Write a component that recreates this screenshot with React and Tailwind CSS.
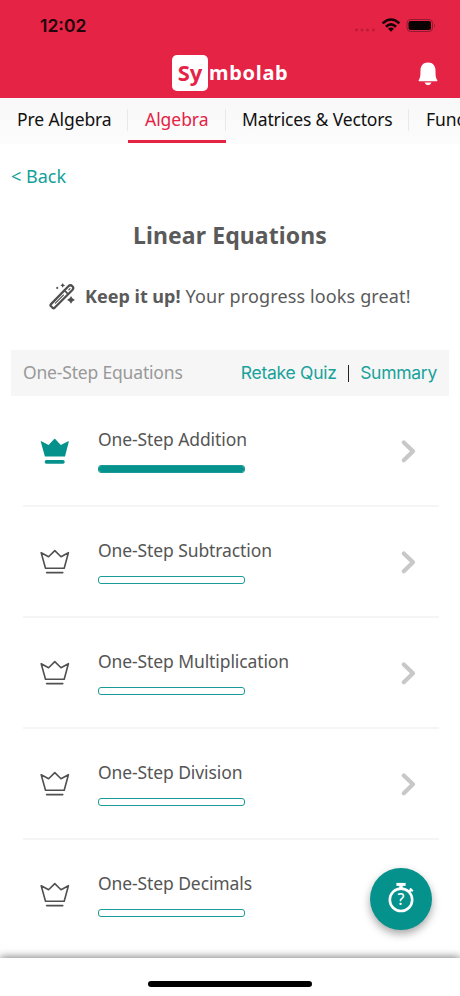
import React, { useState } from 'react'
import clsx from 'clsx'

const TABS = [
  { name: 'Pre Algebra', width: 'w-[128px]', tracking: 'tracking-[-0.1px]' },
  { name: 'Algebra', width: 'w-[98px]', tracking: 'tracking-[-0.05px]' },
  { name: 'Matrices & Vectors', width: 'w-[183px]', tracking: 'tracking-[-0.15px] -indent-px' },
  { name: 'Functions', width: 'w-[120px]', tracking: 'tracking-[-0.1px]' },
]

const LESSONS = [
  { id: 1, title: 'One-Step Addition', progress: 100 },
  { id: 2, title: 'One-Step Subtraction', progress: 0 },
  { id: 3, title: 'One-Step Multiplication', progress: 0 },
  { id: 4, title: 'One-Step Division', progress: 0 },
  { id: 5, title: 'One-Step Decimals', progress: 0 },
]

function StatusIcons() {
  return (
    <svg width="84" height="16" viewBox="0 0 84 16">
      <g fill="#b81c38">
        <circle cx="4.5" cy="13" r="1.4" />
        <circle cx="10" cy="13" r="1.4" />
        <circle cx="15.5" cy="13" r="1.4" />
        <circle cx="21.5" cy="13" r="1.4" />
      </g>
      <g fill="none" stroke="#160306" strokeWidth="2.6">
        <path d="M30.6 6.4 Q39 -1.4 47.4 6.4" />
        <path d="M34 9.8 Q39 5 44 9.8" />
      </g>
      <path d="M36 11.8 Q39 9.2 42 11.8 L39 14.8 Z" fill="#160306" />
      <rect x="55" y="2.5" width="25.5" height="12" rx="3.6" fill="none" stroke="#921a30" />
      <rect x="56.5" y="4" width="22.5" height="9" rx="2.2" fill="#0b0203" />
      <path d="M82 6.5 Q83.7 8.5 82 10.5 Z" fill="#921a30" />
    </svg>
  )
}

function Bell() {
  return (
    <svg width="20" height="24" viewBox="0 0 20 24" fill="#fff">
      <path d="M10 0.5 C5 0.5 2.5 4 2.5 8.5 C2.5 14 2.2 16 0.7 18 Q0.3 19.2 1.3 19.2 H18.7 Q19.7 19.2 19.3 18 C17.8 16 17.5 14 17.5 8.5 C17.5 4 15 0.5 10 0.5 Z" />
      <path d="M6.5 20.6 H13.5 Q12.5 23.2 10 23.2 Q7.5 23.2 6.5 20.6 Z" />
    </svg>
  )
}

function Crown({ filled }) {
  if (filled) {
    return (
      <svg width="30" height="27" viewBox="0 0 30 27" fill="#05928c">
        <path d="M0.8 3.8 Q0.6 2.9 1.4 3.3 L8.6 6.9 L14.2 0.9 Q14.7 0.4 15.2 0.9 L20.8 6.9 L28.2 3.3 Q29 2.9 28.8 3.8 L25 18.6 H4.9 Z" />
        <rect x="4.7" y="22" width="20" height="3.8" rx="1.7" />
      </svg>
    )
  }
  return (
    <svg width="30" height="27" viewBox="0 0 30 27" fill="none" stroke="#505050" strokeWidth="1.6" strokeLinejoin="round" strokeLinecap="round">
      <path d="M1.2 3.7 L8.6 7.7 L14.8 1.6 L21 7.7 L28.4 3.7 L24.2 19.2 H5.5 Z" />
      <path d="M6.6 23.6 H22.8" />
    </svg>
  )
}

function Wand() {
  return (
    <svg width="27" height="27" viewBox="0 0 27 27" fill="none" stroke="#505050" strokeWidth="2.3" strokeLinejoin="round" strokeLinecap="round">
      <path d="M1.8 21.4 L19.4 3.2 Q21.4 1.2 23.4 3.2 Q25.2 5 23.4 7 L5.6 24.8 Q4.6 25.6 3.6 24.8 L1.8 23 Q1.1 22.2 1.8 21.4 Z" />
      <path d="M15.4 7.4 L19.2 11.2" strokeWidth="1.7" />
      <path d="M6.4 20.2 L14.4 12.2" strokeWidth="1.2" />
      <path d="M19.8 6.8 L21 5.6" strokeWidth="1.2" />
      <g fill="#505050" stroke="none">
        <path d="M13.7 0 Q14.1 2 16.1 2.4 Q14.1 2.8 13.7 4.8 Q13.3 2.8 11.3 2.4 Q13.3 2 13.7 0 Z" />
        <path d="M8.2 3.6 L9.5 4.9 L8.2 6.2 L6.9 4.9 Z" />
        <path d="M22 13 Q22.9 16 25.9 16.9 Q22.9 17.8 22 20.8 Q21.1 17.8 18.1 16.9 Q21.1 16 22 13 Z" />
      </g>
    </svg>
  )
}

function Stopwatch() {
  return (
    <svg width="28" height="32" viewBox="0 0 28 32" fill="none" stroke="#fff">
      <circle cx="14" cy="18.8" r="11.2" strokeWidth="2.6" />
      <path d="M9.4 3.4 H18.6" strokeWidth="3" />
      <path d="M14 4 V7.6" strokeWidth="3.4" />
      <path d="M22 10.8 L24.4 8.4" strokeWidth="2.4" />
      <path d="M23 7.4 L25.8 10.2" strokeWidth="2" />
      <text x="14" y="24.3" textAnchor="middle" fontSize="15.5" fontWeight="500" fontFamily="'Noto Sans', sans-serif" fill="#fff" stroke="none">?</text>
    </svg>
  )
}

function LessonRow({ lesson, last }) {
  return (
    <div className={clsx('flex h-[111px] items-start pl-[17px] pr-[23px]', !last && 'border-b-2 border-[#f5f5f5]')}>
      <div className="mt-[42px] w-[58px]">
        <Crown filled={lesson.progress === 100} />
      </div>
      <div className="flex-1 pt-[29px]">
        <div className="h-7 text-[17.5px] leading-7 tracking-[-0.1px] whitespace-nowrap text-[#555]">{lesson.title}</div>
        <div className="mt-3 h-[8px] w-[147px] overflow-hidden rounded-[3px] border border-[#1b9b97]">
          <div className="h-full bg-[#05928c]" style={{ width: `${lesson.progress}%` }} />
        </div>
      </div>
      <svg className="mt-[43px]" width="16" height="25" viewBox="0 0 16 25" fill="none" stroke="#c8c8c8" strokeWidth="4.2" strokeLinecap="round" strokeLinejoin="round">
        <path d="M3.8 3.4 L13 12.3 L3.8 21.2" />
      </svg>
    </div>
  )
}

export default function App() {
  const [active, setActive] = useState('Algebra')

  return (
    <div className="relative flex h-[996px] w-[460px] flex-col overflow-hidden bg-white font-['Noto_Sans',sans-serif]">
      <header className="h-[98px] shrink-0 bg-[#e52345]">
        <div className="flex h-[51px] items-start justify-between pt-[17px] pr-6 pl-10">
          <span className="font-['Inter',sans-serif] text-[17.5px] leading-[18px] font-semibold text-[#21050a]">12:02</span>
          <StatusIcons />
        </div>
        <div className="flex items-start justify-between pl-[172px] pr-[22px]">
          <div className="flex items-start pt-1">
            <span className="flex h-[36px] w-[36px] items-center justify-center rounded-[5px] bg-white pb-0.5 text-[22px] font-bold text-[#e52345]">Sy</span>
            <span className="ml-px text-[20px] leading-[35px] font-bold tracking-[0.7px] text-white">mbolab</span>
          </div>
          <div className="pt-[11px]">
            <Bell />
          </div>
        </div>
      </header>

      <nav className="flex h-[46px] shrink-0 bg-gradient-to-b from-[#f8f8f8] to-[#fcfcfc]">
        {TABS.map((tab) => (
          <button
            key={tab.name}
            onClick={() => setActive(tab.name)}
            className={clsx(
              'flex h-[45px] shrink-0 flex-col justify-between text-[17.5px] leading-[20px] whitespace-nowrap',
              tab.width,
              active === tab.name ? 'text-[#e52345]' : 'text-[#111]'
            )}
          >
            <span className={clsx('mt-[11px] h-[22px] w-full border-r border-[#e9e9e9] pl-[17px] text-left', tab.tracking)}>{tab.name}</span>
            {active === tab.name && <span className="h-[3px] w-full bg-[#e52345]" />}
          </button>
        ))}
      </nav>

      <main className="flex flex-1 flex-col">
        <a className="mt-[18px] ml-[11px] h-7 text-[18px] leading-7 text-[#109f9a]">&lt; Back</a>
        <h1 className="mt-[27px] h-9 text-center text-[23px] leading-9 font-bold tracking-[0.1px] text-[#5a5a5a]">Linear Equations</h1>
        <div className="mt-[29px] flex h-7 items-center pl-[49px] text-[18px] leading-7 whitespace-nowrap text-[#5a5a5a]">
          <Wand />
          <span className="ml-[9px] font-bold">Keep it up!</span>
          <span className="ml-[5px] tracking-[0.13px]">Your progress looks great!</span>
        </div>

        <div className="mt-10 ml-[11px] flex h-[46px] w-[438px] items-center justify-between bg-[#f6f6f6] px-3">
          <span className="pb-0.5 text-[17.5px] tracking-[-0.18px] text-[#999]">One-Step Equations</span>
          <div className="flex items-center font-['Inter',sans-serif] text-[17.5px] tracking-[-0.27px] whitespace-nowrap text-[#17a29b]">
            <a>Retake Quiz</a>
            <span className="mr-[11px] ml-[11px] h-[17px] w-[1.5px] bg-[#222]" />
            <a>Summary</a>
          </div>
        </div>

        <section className="mr-[21px] ml-[23px]">
          {LESSONS.map((lesson, i) => (
            <LessonRow key={lesson.id} lesson={lesson} last={i === LESSONS.length - 1} />
          ))}
        </section>
      </main>

      <button className="absolute top-[868px] left-[370px] flex h-[62px] w-[62px] items-center justify-center rounded-full bg-[#05928c] pb-1 shadow-[0_4px_8px_rgba(0,0,0,0.35)]">
        <Stopwatch />
      </button>

      <footer className="absolute bottom-0 left-0 flex h-[38px] w-full justify-center bg-white pt-[23px] shadow-[0_-1px_8px_rgba(0,0,0,0.5)]">
        <div className="h-[6px] w-[164px] rounded-full bg-black" />
      </footer>
    </div>
  )
}
